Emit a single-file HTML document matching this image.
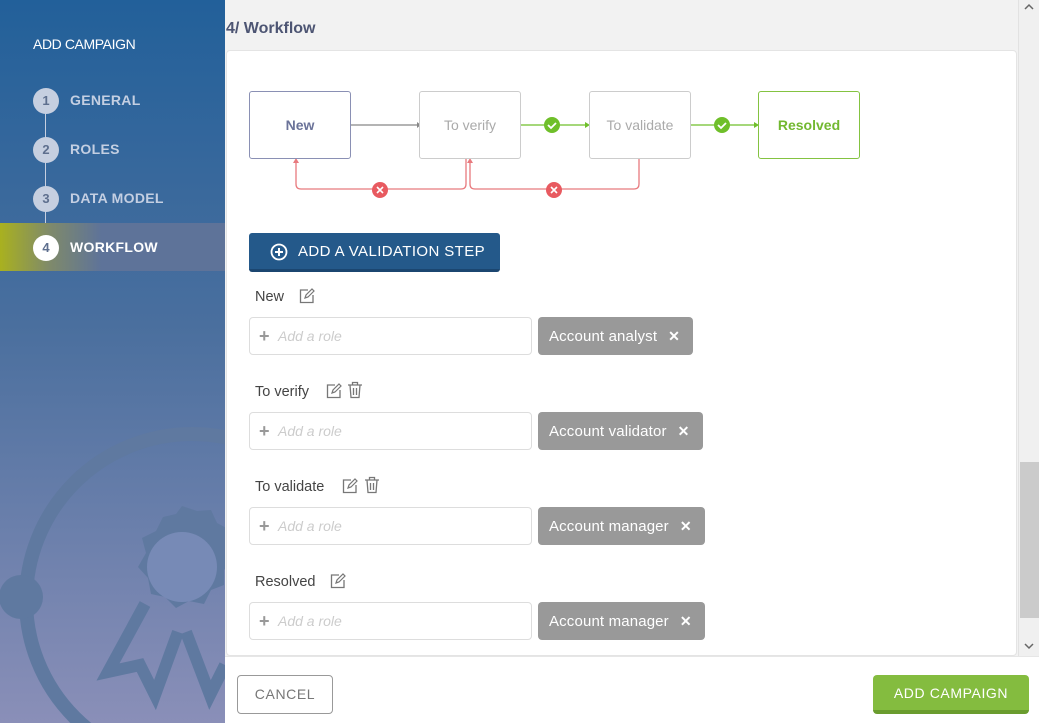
<!DOCTYPE html>
<html style="overflow:hidden"><head><meta charset="utf-8"><style>
*{margin:0;padding:0;box-sizing:border-box}
body{width:1039px;height:723px;overflow:hidden;font-family:"Liberation Sans",sans-serif;background:#f2f2f2;position:relative}
.side{position:absolute;left:0;top:0;width:225px;height:723px;background:linear-gradient(#22609a,#4a6f9e 45%,#8a8fb8);overflow:hidden}
.side h1{position:absolute;left:33px;top:36px;color:#fff;font-size:14px;font-weight:normal;letter-spacing:-.4px}
.step{position:absolute;left:0;width:225px;height:48px}
.step .c{position:absolute;left:33px;top:12px;width:26px;height:26px;border-radius:50%;background:#c6cfe0;color:#5e6f8e;font-size:13px;font-weight:bold;text-align:center;line-height:26px}
.step .t{position:absolute;left:70px;top:16px;color:#c4cfe2;font-size:14px;font-weight:bold;letter-spacing:.3px}
.line{position:absolute;left:45px;top:112px;width:1px;height:120px;background:#c6cfe0}
.act{background:linear-gradient(90deg,#a9b11f 0,#7f8a6a 22%,#5e7399 45%,#5e7399)}
.act .c{background:#fff;color:#5e6f8e}.act .t{color:#fff}
.title{position:absolute;left:226px;top:20px;font-size:16px;font-weight:bold;color:#4d5573}
.card{position:absolute;left:226px;top:50px;width:791px;height:606px;background:#fff;border:1px solid #e4e4e4;border-radius:4px}
.box{position:absolute;top:91px;width:102px;height:68px;border:1px solid #ccc;border-radius:3px;background:#fff;text-align:center;line-height:66px;font-size:14px;color:#aaa}
.lbl{position:absolute;left:255px;font-size:14.5px;color:#444}
.inp{position:absolute;left:249px;width:283px;height:38px;border:1px solid #ddd;border-radius:4px;font-size:14px;color:#ccc;font-style:italic;line-height:36px;padding-left:28px}
.inp:before{content:"+";position:absolute;left:9px;font-style:normal;color:#999;font-size:18px;font-weight:bold}
.tag{position:absolute;left:538px;height:38px;background:#999;border-radius:4px;color:#fff;font-size:15px;line-height:38px;padding:0 13px 0 11px;letter-spacing:.15px}
.tag b{margin-left:11px;font-size:14px}
.ic{position:absolute}
.foot{position:absolute;left:225px;top:656px;width:814px;height:67px;background:#fff;border-top:1px solid #e6e6e6}
.sb{position:absolute;left:1018px;top:0;width:21px;height:656px;background:#f0f0f0;border-left:1px solid #e2e2e2}
</style></head><body>
<div class="side">
<svg width="225" height="723" style="position:absolute;left:0;top:0">
<g fill="none" stroke="#5f79a0" stroke-width="14"><circle cx="192" cy="600" r="166"/></g>
<circle cx="21" cy="597" r="22" fill="#5f79a0"/>
<g fill="#5f79a0">
<polygon points="182,506 197,511 211,510 217,523 230,530 228,545 234,558 224,570 224,585 211,590 204,604 189,601 176,608 165,597 151,594 148,578 138,567 146,553 142,538 156,531 163,517 176,514"/>
</g>
<circle cx="182" cy="567" r="35" fill="#778ab6"/>
<g fill="none" stroke="#5f79a0" stroke-width="12" stroke-linejoin="miter">
<polyline points="145,604 108,672 140,665 155,695 178,632"/>
<polyline points="186,632 210,695 225,665"/>
</g>
</svg>
<h1>ADD CAMPAIGN</h1>
<div class="line"></div>
<div class="step" style="top:76px"><div class="c">1</div><div class="t">GENERAL</div></div>
<div class="step" style="top:125px"><div class="c">2</div><div class="t">ROLES</div></div>
<div class="step" style="top:174px"><div class="c">3</div><div class="t">DATA MODEL</div></div>
<div class="step act" style="top:223px"><div class="c">4</div><div class="t">WORKFLOW</div></div>
</div>
<div class="title">4/ Workflow</div>
<div class="card"></div>
<svg width="700" height="120" style="position:absolute;left:240px;top:85px">
<g fill="none" stroke-width="1.3">
<line x1="111" y1="40" x2="177" y2="40" stroke="#888"/>
<polygon points="177,37 181,40 177,43" fill="#888" stroke="none"/>
<line x1="281" y1="40" x2="347" y2="40" stroke="#6fbf2a"/>
<polygon points="345,37 350,40 345,43" fill="#6fbf2a" stroke="none"/>
<line x1="451" y1="40" x2="516" y2="40" stroke="#6fbf2a"/>
<polygon points="514,37 519,40 514,43" fill="#6fbf2a" stroke="none"/>
<path d="M226 74 V99 Q226 104 221 104 H61 Q56 104 56 99 V76" stroke="#e87a7e"/>
<path d="M399 74 V99 Q399 104 394 104 H235 Q230 104 230 99 V76" stroke="#e87a7e"/>
</g>
<polygon points="53,78 56,73 59,78" fill="#e87a7e"/>
<polygon points="227,78 230,73 233,78" fill="#e87a7e"/>
<circle cx="312" cy="40" r="8" fill="#6fbf2a"/><path d="M308 40 l3 3 l5-5" stroke="#fff" stroke-width="1.8" fill="none"/>
<circle cx="482" cy="40" r="8" fill="#6fbf2a"/><path d="M478 40 l3 3 l5-5" stroke="#fff" stroke-width="1.8" fill="none"/>
<circle cx="140" cy="105" r="8" fill="#e85a60"/><path d="M137 102 l6 6 M143 102 l-6 6" stroke="#fff" stroke-width="1.6"/>
<circle cx="314" cy="105" r="8" fill="#e85a60"/><path d="M311 102 l6 6 M317 102 l-6 6" stroke="#fff" stroke-width="1.6"/>
</svg>
<div class="box" style="left:249px;border-color:#8a90b4;color:#6b7399;font-weight:bold">New</div>
<div class="box" style="left:419px">To verify</div>
<div class="box" style="left:589px">To validate</div>
<div class="box" style="left:758px;border-color:#84c341;color:#72b830;font-weight:bold">Resolved</div>
<div style="position:absolute;left:249px;top:233px;width:251px;height:39px;background:#24598a;border-bottom:3px solid #1b4670;border-radius:3px;color:#fff;font-size:15px;letter-spacing:.4px;line-height:38px;padding-left:49px">ADD A VALIDATION STEP</div>
<svg style="position:absolute;left:270px;top:243px" width="18" height="18"><circle cx="9" cy="9" r="7.5" fill="none" stroke="#fff" stroke-width="1.8"/><path d="M9 5v8M5 9h8" stroke="#fff" stroke-width="2"/></svg>

<div class="lbl" style="top:289px">New</div>
<div class="lbl" style="top:384px">To verify</div>
<div class="lbl" style="top:479px">To validate</div>
<div class="lbl" style="top:574px">Resolved</div>

<svg class="ic" style="left:299px;top:288px" width="16" height="16"><path d="M9 2H1.5v12.5H14V7" fill="none" stroke="#777" stroke-width="1.3"/><path d="M6 10l1-3 6-6 2 2-6 6z" fill="none" stroke="#777" stroke-width="1.2"/></svg>
<svg class="ic" style="left:326px;top:383px" width="16" height="16"><path d="M9 2H1.5v12.5H14V7" fill="none" stroke="#777" stroke-width="1.3"/><path d="M6 10l1-3 6-6 2 2-6 6z" fill="none" stroke="#777" stroke-width="1.2"/></svg>
<svg class="ic" style="left:347px;top:381px" width="16" height="18"><path d="M1 4h14M5.5 4V1.5h5V4M3 4l1 12.5h8L13 4M6.5 7v7M9.5 7v7" fill="none" stroke="#777" stroke-width="1.3"/></svg>
<svg class="ic" style="left:342px;top:478px" width="16" height="16"><path d="M9 2H1.5v12.5H14V7" fill="none" stroke="#777" stroke-width="1.3"/><path d="M6 10l1-3 6-6 2 2-6 6z" fill="none" stroke="#777" stroke-width="1.2"/></svg>
<svg class="ic" style="left:364px;top:476px" width="16" height="18"><path d="M1 4h14M5.5 4V1.5h5V4M3 4l1 12.5h8L13 4M6.5 7v7M9.5 7v7" fill="none" stroke="#777" stroke-width="1.3"/></svg>
<svg class="ic" style="left:330px;top:573px" width="16" height="16"><path d="M9 2H1.5v12.5H14V7" fill="none" stroke="#777" stroke-width="1.3"/><path d="M6 10l1-3 6-6 2 2-6 6z" fill="none" stroke="#777" stroke-width="1.2"/></svg>

<div class="inp" style="top:317px">Add a role</div><div class="tag" style="top:317px">Account analyst<b>✕</b></div>
<div class="inp" style="top:412px">Add a role</div><div class="tag" style="top:412px">Account validator<b>✕</b></div>
<div class="inp" style="top:507px">Add a role</div><div class="tag" style="top:507px">Account manager<b>✕</b></div>
<div class="inp" style="top:602px">Add a role</div><div class="tag" style="top:602px">Account manager<b>✕</b></div>

<div class="sb"><div style="position:absolute;left:1px;top:462px;width:19px;height:156px;background:#cbcbcb"></div>
<svg style="position:absolute;left:5px;top:3px" width="10" height="8"><path d="M1 6l4-4 4 4" fill="none" stroke="#666" stroke-width="1.5"/></svg>
<svg style="position:absolute;left:5px;top:642px" width="10" height="8"><path d="M1 2l4 4 4-4" fill="none" stroke="#666" stroke-width="1.5"/></svg></div>
<div class="foot">
<div style="position:absolute;left:12px;top:18px;width:96px;height:39px;border:1px solid #999;border-radius:4px;color:#777;font-size:14px;letter-spacing:.6px;text-align:center;line-height:37px">CANCEL</div>
<div style="position:absolute;left:648px;top:18px;width:156px;height:39px;background:#84bc3f;border-bottom:4px solid #6a9c2e;border-radius:4px;color:#fff;font-size:14px;letter-spacing:.6px;text-align:center;line-height:37px">ADD CAMPAIGN</div>
</div>
</body></html>
